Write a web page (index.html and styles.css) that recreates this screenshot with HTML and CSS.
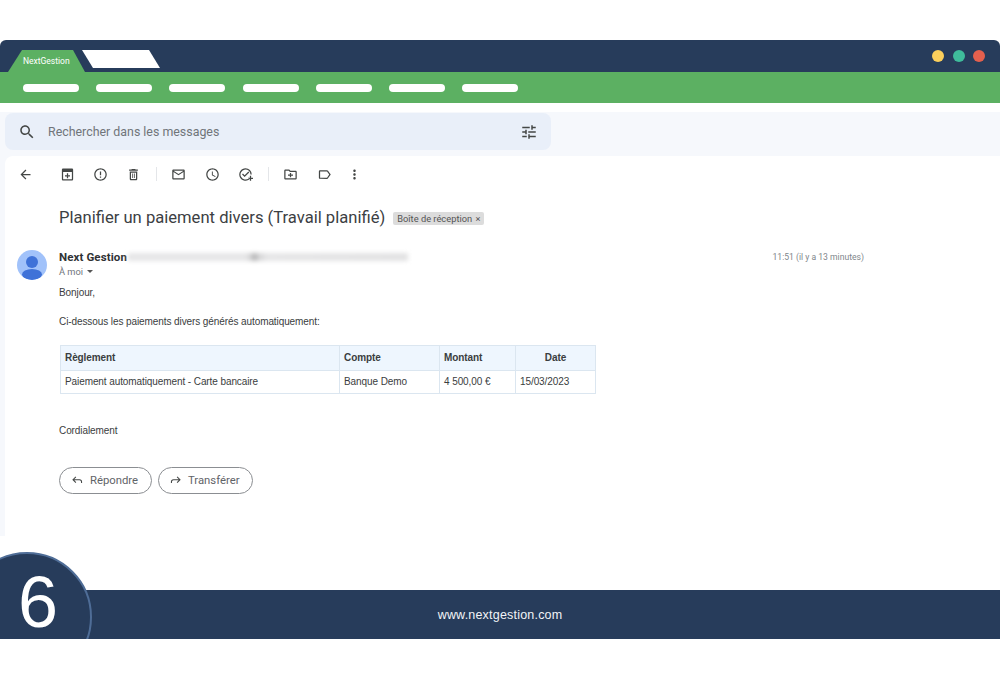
FILE: index.html
```html
<!DOCTYPE html>
<html lang="fr">
<head>
<meta charset="utf-8">
<title>NextGestion</title>
<link rel="stylesheet" href="styles.css">
</head>
<body>
<div class="page">
  <header class="titlebar">
    <div class="tabs">
      <div class="tab-active">NextGestion</div>
      <div class="tab-blank"></div>
    </div>
    <div class="dots">
      <span class="dot dot-yellow"></span>
      <span class="dot dot-teal"></span>
      <span class="dot dot-red"></span>
    </div>
  </header>
  <nav class="greenbar">
    <span class="pill"></span><span class="pill"></span><span class="pill"></span><span class="pill"></span><span class="pill"></span><span class="pill"></span><span class="pill"></span>
  </nav>
  <main class="gmail">
    <div class="searchrow">
      <div class="search">
        <svg class="icon-search" viewBox="0 0 24 24"><path d="M15.500 14h-.79l-.28-.27C15.410 12.590 16 11.110 16 9.500 16 5.910 13.090 3 9.500 3S3 5.910 3 9.500 5.910 16 9.500 16c1.610 0 3.090-.59 4.230-1.570l.27.28v.79l5 4.990L20.490 19l-4.990-5zm-6 0C7.010 14 5 11.990 5 9.500S7.010 5 9.500 5 14 7.010 14 9.500 11.990 14 9.500 14z"/></svg>
        <span class="search-text">Rechercher dans les messages</span>
        <svg class="icon-tune" viewBox="0 0 24 24"><path d="M3 17v2h6v-2H3zM3 5v2h10V5H3zm10 16v-2h8v-2h-8v-2h-2v6h2zM7 9v2H3v2h4v2h2V9H7zm14 4v-2H11v2h10zm-6-4h2V7h4V5h-4V3h-2v6z"/></svg>
      </div>
    </div>
    <section class="mail">
      <div class="toolbar">
        <svg class="tool tool-back" viewBox="0 0 24 24"><path d="M20 11H7.830l5.590-5.590L12 4l-8 8 8 8 1.410-1.410L7.830 13H20v-2z"/></svg>
        <svg class="tool tool-first" viewBox="0 0 24 24"><path d="M20 2.500H4L3 4v15.500c0 1.100.9 2 2 2h14c1.100 0 2-.9 2-2V4l-1-1.500zM5 8h14v11.500H5V8zM11 10h2v3h3v2h-3v3h-2v-3H8v-2h3v-3z"/></svg>
        <svg class="tool" viewBox="0 0 24 24"><path d="M11 15h2v2h-2zm0-8h2v6h-2zm.99-5C6.470 2 2 6.480 2 12s4.470 10 9.990 10C17.520 22 22 17.520 22 12S17.520 2 11.990 2zM12 20c-4.420 0-8-3.580-8-8s3.580-8 8-8 8 3.580 8 8-3.580 8-8 8z"/></svg>
        <svg class="tool" viewBox="0 0 24 24"><path d="M6 19c0 1.100.9 2 2 2h8c1.100 0 2-.9 2-2V7H6v12zM8 9h8v10H8V9zm7.500-5l-1-1h-5l-1 1H5v2h14V4zM10 10.500h1.300v7H10zM12.700 10.500H14v7h-1.300z"/></svg>
        <span class="sep"></span>
        <svg class="tool" viewBox="0 0 24 24"><path d="M20 4H4c-1.100 0-2 .9-2 2v12c0 1.100.9 2 2 2h16c1.100 0 2-.9 2-2V6c0-1.100-.9-2-2-2zm0 14H4V8l8 5 8-5v10zm-8-7L4 6h16l-8 5z"/></svg>
        <svg class="tool" viewBox="0 0 24 24"><path d="M11.990 2C6.470 2 2 6.480 2 12s4.470 10 9.990 10C17.520 22 22 17.520 22 12S17.520 2 11.990 2zM12 20c-4.420 0-8-3.580-8-8s3.580-8 8-8 8 3.580 8 8-3.580 8-8 8zm.5-13H11v6l5.250 3.150.75-1.230-4.500-2.670z"/></svg>
        <svg class="tool" viewBox="0 0 24 24"><path d="M12 2a10 10 0 1 0 6.500 17.600l-1.300-1.500A8 8 0 1 1 20 12h2A10 10 0 0 0 12 2zM16.600 7.200l-6 6-2.700-2.700-1.400 1.400 4.100 4.100 7.400-7.400zM19 14h2v3h3v2h-3v3h-2v-3h-3v-2h3z"/></svg>
        <span class="sep"></span>
        <svg class="tool" viewBox="0 0 24 24"><path d="M20 6h-8l-2-2H4c-1.100 0-2 .9-2 2v12c0 1.100.9 2 2 2h16c1.100 0 2-.9 2-2V8c0-1.100-.9-2-2-2zm0 12H4V6h5.170l2 2H20v10zM13 9.500h-2V12H8v2h3v2.500h2V14h3v-2h-3z"/></svg>
        <svg class="tool" viewBox="0 0 24 24"><path d="M17.630 5.840C17.270 5.330 16.670 5 16 5L5 5.010C3.900 5.010 3 5.900 3 7v10c0 1.100.9 1.990 2 1.990L16 19c.67 0 1.270-.33 1.630-.84L22 12l-4.370-6.160zM16 17H5V7h11l3.550 5L16 17z"/></svg>
        <svg class="tool tool-more" viewBox="0 0 24 24"><path d="M12 8c1.100 0 2-.9 2-2s-.9-2-2-2-2 .9-2 2 .9 2 2 2zm0 2c-1.100 0-2 .9-2 2s.9 2 2 2 2-.9 2-2-.9-2-2-2zm0 6c-1.100 0-2 .9-2 2s.9 2 2 2 2-.9 2-2-.9-2-2-2z"/></svg>
      </div>
      <div class="subject">
        <h1>Planifier un paiement divers (Travail planifié)</h1>
        <span class="chip">Boîte de réception <span class="chip-x">×</span></span>
      </div>
      <div class="sender">
        <svg class="avatar" viewBox="0 0 30 30"><defs><clipPath id="round"><circle cx="15" cy="15" r="15"/></clipPath></defs><g clip-path="url(#round)"><rect width="30" height="30" fill="#a1c2fa"/><circle cx="15" cy="12" r="6" fill="#3f72d8"/><ellipse cx="15" cy="24.500" rx="10" ry="5.500" fill="#3f72d8"/></g></svg>
        <div class="sender-info">
          <div class="sender-line">
            <strong class="sender-name">Next Gestion</strong>
            <span class="sender-blur"></span>
            <span class="time">11:51 (il y a 13 minutes)</span>
          </div>
          <div class="to">À moi <span class="caret"></span></div>
        </div>
      </div>
      <div class="body">
        <p class="hello">Bonjour,</p>
        <p class="intro">Ci-dessous les paiements divers générés automatiquement:</p>
        <table class="grid">
          <thead>
            <tr><th class="c1">Règlement</th><th class="c2">Compte</th><th class="c3">Montant</th><th class="c4">Date</th></tr>
          </thead>
          <tbody>
            <tr><td>Paiement automatiquement - Carte bancaire</td><td>Banque Demo</td><td>4 500,00 €</td><td>15/03/2023</td></tr>
          </tbody>
        </table>
        <p class="bye">Cordialement</p>
        <div class="actions">
          <button class="btn btn-reply"><svg viewBox="0 0 16 16"><path d="M6 3.500 2.500 7 6 10.500M3 7h7.500c1.500 0 2.500 1 2.500 2.500V11"/></svg>Répondre</button>
          <button class="btn btn-fwd"><svg viewBox="0 0 16 16"><path d="M10 3.500 13.500 7 10 10.500M13 7H5.500C4 7 3 8 3 9.500V11"/></svg>Transférer</button>
        </div>
      </div>
    </section>
  </main>
  <footer class="footer">
    <div class="badge">6</div>
    <span class="site">www.nextgestion.com</span>
  </footer>
</div>
</body>
</html>
```
FILE: styles.css
```css
* { box-sizing: border-box; }
html, body { margin: 0; padding: 0; background: #fff; }
body { width: 1000px; height: 679px; overflow: hidden; font-family: "Liberation Sans", Arial, sans-serif; }
.page { padding-top: 40px; filter: blur(0.4px); }

.titlebar { height: 32px; background: #273c5b; border-radius: 6px 6px 0 0; display: flex; justify-content: space-between; }
.tabs { position: relative; flex: 1; }
.tab-active { position: absolute; left: 8px; top: 10px; width: 77px; height: 22px; background: #5cb062; color: #fff; font: 8.500px/23px Roboto, sans-serif; padding-left: 15px; clip-path: polygon(0 100%, 14px 0, 65px 0, 100% 100%); }
.tab-blank { position: absolute; left: 82px; top: 10px; width: 78px; height: 18px; background: #fff; clip-path: polygon(0 0, 67px 0, 100% 100%, 11px 100%); }
.dots { display: flex; gap: 8.500px; padding: 10px 15px 0 0; }
.dot { width: 12px; height: 12px; border-radius: 50%; }
.dot-yellow { background: #fbcf5c; }
.dot-teal { background: #3fbc9b; }
.dot-red { background: #e4604e; }

.greenbar { height: 31px; background: #5cb062; display: flex; align-items: center; gap: 17.200px; padding: 1px 0 0 23px; }
.pill { width: 56px; height: 8px; border-radius: 4px; background: #fff; }

.gmail { height: 424px; margin-top: 9px; background: #f6f8fc; display: flex; flex-direction: column; }
.searchrow { padding: 1px 0 6px 5px; }
.search { width: 546px; height: 37px; background: #e9eff9; border-radius: 8px; display: flex; align-items: center; padding: 0 13px; }
.icon-search { width: 18px; height: 18px; fill: #444746; }
.search-text { margin-left: 12px; flex: 1; font: 12.400px Roboto, sans-serif; color: #70757a; }
.icon-tune { width: 18px; height: 18px; fill: #444746; }

.mail { flex: 1; margin-left: 5px; border-radius: 8px 0 0 0; background: #fff; }
.toolbar { height: 36px; display: flex; align-items: center; }
.tool { width: 15px; height: 15px; fill: #444746; margin-right: 18.200px; flex: none; }
.tool-back { margin-left: 12.500px; margin-right: 27px; }
.tool-more { margin-left: -2.400px; }
.sep { width: 1px; height: 14px; background: #e4e6e9; margin: 0 14.500px 0 -3.100px; flex: none; }

.subject { display: flex; align-items: center; margin: 14px 0 0 54px; height: 24px; }
h1 { margin: 0; font: 400 16.600px/24px Roboto, sans-serif; color: #3c4043; }
.chip { margin-left: 8px; height: 13px; padding: 0 4px; background: #dcdcdc; border-radius: 2px; font: 9.300px/13px Roboto, sans-serif; color: #555; }
.chip-x { margin-left: 1px; }

.sender { display: flex; margin: 20px 0 0 12px; }
.avatar { width: 30px; height: 30px; flex: none; }
.sender-info { margin-left: 12px; flex: 1; }
.sender-line { display: flex; align-items: center; height: 14px; }
.sender-name { font: 700 11.500px/14px Roboto, sans-serif; letter-spacing: .1px; color: #2f3235; white-space: nowrap; }
.sender-blur { width: 280px; height: 8px; margin-left: 1px; background: linear-gradient(90deg, #e6e6e7 0 42%, #d2d2d3 44%, #b0b0b1 45%, #d8d8d9 47%, #e6e6e7 50%, #e2e2e3 100%); filter: blur(2px); }
.time { margin-left: auto; margin-right: 136px; font: 8.600px/14px Roboto, sans-serif; color: #80868b; }
.to { margin-top: 1px; font: 9.300px/13px Roboto, sans-serif; color: #70757a; display: flex; align-items: center; }
.caret { width: 0; height: 0; margin-left: 4px; border: 3.500px solid transparent; border-top: 3.500px solid #555; border-bottom: 0; }

.body { margin-left: 54px; font-size: 10px; letter-spacing: -.09px; line-height: 14px; color: #3a3d40; }
.hello { margin: 6px 0 0; }
.intro { margin: 15px 0 0; }
.grid { margin: 16px 0 0 1px; width: 535px; border-collapse: collapse; table-layout: fixed; color: #3a3d40; }
.grid th, .grid td { border: 1px solid #dbe6f0; padding: 0 4px; text-align: left; font-size: 10px; }
.grid th { height: 25px; background: #eef6fe; font-weight: 700; }
.grid td { height: 23px; }
.grid .c1 { width: 279px; }
.grid .c2 { width: 100px; }
.grid .c3 { width: 76px; }
.grid .c4 { width: 80px; text-align: center; }
.bye { margin: 30px 0 0; }
.actions { display: flex; gap: 6px; margin-top: 29px; letter-spacing: 0; }
.btn { height: 27px; border: 1px solid #8b8e92; border-radius: 14px; background: #fff; display: flex; align-items: center; font: 11.300px Roboto, sans-serif; color: #5f6368; padding: 0; }
.btn svg { width: 13px; height: 13px; margin-right: 6px; fill: none; stroke: #444746; stroke-width: 1.300px; }
.btn-reply { width: 93px; padding-left: 11px; }
.btn-fwd { width: 95px; padding-left: 10px; }

.footer { position: relative; margin-top: 54px; height: 49px; background: #273c5b; display: flex; align-items: center; justify-content: center; clip-path: inset(-40px 0 0 0); }
.site { font-size: 12.500px; letter-spacing: .2px; color: #f2f4f7; }
.badge { position: absolute; left: -38px; top: -38px; width: 130px; height: 130px; padding-left: 54px; border-radius: 50%; background: #273c5b; border: 2px solid #4f6d97; color: #fff; font: 72px/96px "Liberation Sans", sans-serif; }
```
